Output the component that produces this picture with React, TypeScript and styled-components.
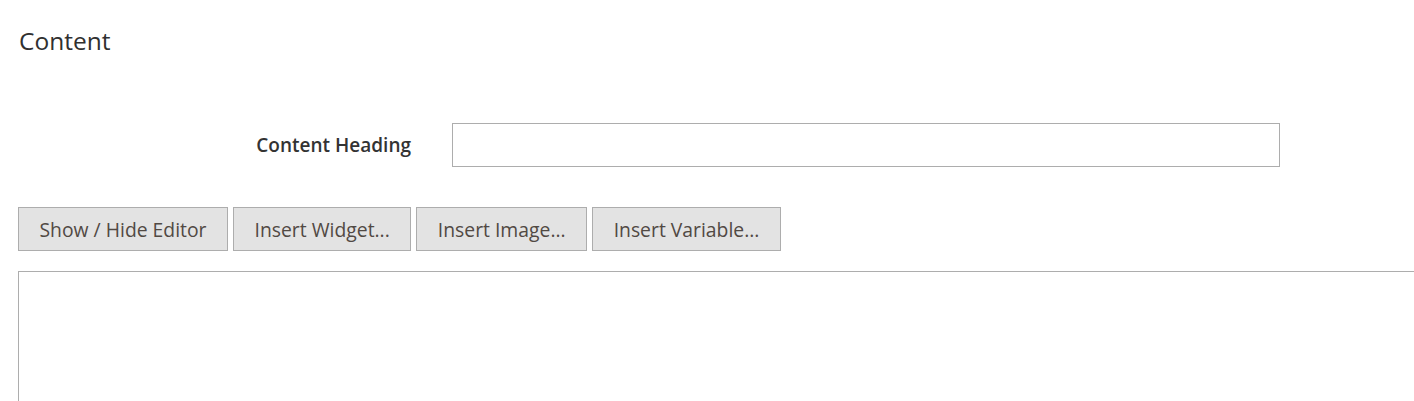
import React from "react";
import styled, { createGlobalStyle } from "styled-components";

const Global = createGlobalStyle`
  html, body { margin: 0; padding: 0; background: #fff; }
  body { font-family: "Open Sans", "Noto Sans", sans-serif; color: #303030; }
`;

const Page = styled.div`
  padding: 24px 0 0 18px;
  width: 1414px;
  box-sizing: border-box;
  overflow: hidden;
  height: 401px;
`;

const Title = styled.h2`
  margin: 0 0 0 1px;
  font-size: 24.5px;
  font-weight: 400;
  line-height: 34px;
  color: #303030;
`;

const FieldRow = styled.div`
  display: flex;
  align-items: center;
  margin-top: 65px;
`;

const Label = styled.label`
  text-align: right;
  font-size: 19px;
  font-weight: 600;
  color: #333;
  padding-right: 41px;
  box-sizing: border-box;
  width: 434px;
`;

const Input = styled.input`
  width: 828px;
  height: 44px;
  box-sizing: border-box;
  border: 1px solid #adadad;
  background: #fff;
  outline: none;
`;

const Toolbar = styled.div`
  display: flex;
  gap: 5px;
  margin-top: 40px;
`;

const Button = styled.button`
  height: 44px;
  box-sizing: border-box;
  padding: 0 20.5px;
  background: #e3e3e3;
  border: 1px solid #adadad;
  color: #514943;
  font-family: "Open Sans", "Noto Sans", sans-serif;
  font-size: 19.35px;
  font-weight: 400;
  cursor: pointer;
`;

const Editor = styled.textarea`
  display: block;
  margin-top: 20px;
  width: 1420px;
  height: 160px;
  box-sizing: border-box;
  border: 1px solid #adadad;
  resize: none;
  outline: none;
`;

export default function App() {
  return (
    <>
      <Global />
      <Page>
        <Title>Content</Title>
        <FieldRow>
          <Label htmlFor="heading">Content Heading</Label>
          <Input id="heading" type="text" />
        </FieldRow>
        <Toolbar>
          <Button>Show / Hide Editor</Button>
          <Button>Insert Widget...</Button>
          <Button>Insert Image...</Button>
          <Button>Insert Variable...</Button>
        </Toolbar>
        <Editor />
      </Page>
    </>
  );
}
